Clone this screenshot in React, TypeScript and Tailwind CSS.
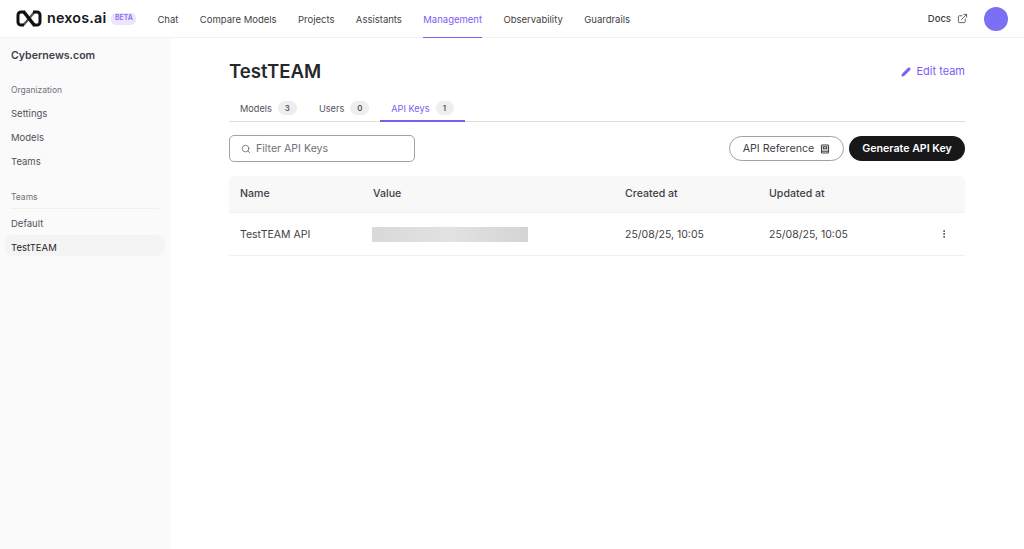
import { EllipsisVertical, ExternalLink, Pencil, Search } from "lucide-react";

const navItems = ["Chat", "Compare Models", "Projects", "Assistants", "Management", "Observability", "Guardrails"];

function Logo() {
  return (
    <svg width="26" height="17" viewBox="0 0 26 17" fill="none" stroke="#111" className="shrink-0">
      <path d="M9 2H5a3 3 0 0 0-3 3v7a3 3 0 0 0 3 3h3" strokeWidth="3" />
      <path d="M17 15h4a3 3 0 0 0 3-3V5a3 3 0 0 0-3-3h-4" strokeWidth="3" />
      <path d="M18.500 2 7.500 15" strokeWidth="2.500" opacity="0.7" />
      <path d="M7.500 1.500 18.500 15.500" strokeWidth="3.500" />
    </svg>
  );
}

function BookIcon() {
  return (
    <svg width="10" height="10" viewBox="0 0 10 10" fill="none" stroke="currentColor" strokeWidth="1.100">
      <rect x="1.500" y="1" width="7" height="8" rx="0.800" />
      <rect x="3.300" y="2.800" width="3.400" height="2" />
      <path d="M1.500 7.200h7" />
    </svg>
  );
}

function SideLink({ label, active }: { label: string; active?: boolean }) {
  return (
    <div className={`mx-[5px] flex h-[21px] items-center rounded-lg px-[6px] pt-[6px] text-[9.500px] ${active ? "bg-[#f4f4f4] text-[#27272a]" : "text-[#52525b]"}`}>
      {label}
    </div>
  );
}

function Tab({ label, count, active }: { label: string; count: number; active?: boolean }) {
  return (
    <div className={`-mb-px flex h-[27px] items-center gap-[6px] border-b-2 px-[11px] text-[9.200px] ${active ? "border-[#7c5cf5] text-[#7c5cf5]" : "border-transparent text-[#52525b]"}`}>
      <span className="pt-[2px]">{label}</span>
      <span className={`flex h-[14px] items-center justify-center rounded-full bg-[#eeeeee] text-[8px] font-medium text-[#3f3f46] ${count === 1 ? "w-[18px]" : "w-[19px]"}`}>{count}</span>
    </div>
  );
}

export default function App() {
  return (
    <div className="flex h-[549px] w-[1024px] flex-col overflow-hidden bg-white font-['Inter',sans-serif] text-[#27272a]">
      <header className="flex h-[38px] shrink-0 items-center border-b border-[#f2f2f2] px-[16px]">
        <Logo />
        <span className="ml-[5px] text-[14.300px] font-semibold leading-none tracking-[0.2px] text-[#18181b]">nexos.ai</span>
        <span className="ml-[5px] flex h-[12px] w-[25px] items-center justify-center rounded-[5px] bg-[#ece6fd] text-[7px] font-semibold text-[#8b6cf6]">BETA</span>
        <nav className="ml-[21px] flex h-full items-center gap-[21.400px]">
          {navItems.map((item) => (
            <div
              key={item}
              className={`-mb-px flex h-full items-center border-b pt-[3px] text-[9.500px] ${item === "Management" ? "border-[#7c5cf5] text-[#7c5cf5]" : "border-transparent text-[#3f3f46]"}`}
            >
              {item}
            </div>
          ))}
        </nav>
        <div className="ml-auto flex items-center gap-[6px] text-[9.500px] font-medium text-[#3f3f46]">
          <span className="pt-[1px]">Docs</span>
          <ExternalLink size={11} strokeWidth={1.75} />
        </div>
        <div className="ml-[16px] h-[24px] w-[24px] rounded-full bg-[#7b6ff5]" />
      </header>

      <div className="flex min-h-0 flex-1">
        <aside className="w-[170px] shrink-0 bg-[#fafafa] pt-[10px]">
          <div className="pl-[11px] text-[10.600px] font-semibold leading-[16px] text-[#3f3f46]">Cybernews.com</div>
          <div className="mb-[5px] mt-[20px] pl-[11px] text-[8.500px] leading-[12px] text-[#71717a]">Organization</div>
          <div className="flex flex-col gap-[3px]">
            <SideLink label="Settings" />
            <SideLink label="Models" />
            <SideLink label="Teams" />
          </div>
          <div className="mx-[11px] mb-[2px] mt-[21px] border-b border-[#efefef] pb-[5px] text-[8.500px] leading-[12px] text-[#71717a]">Teams</div>
          <div className="flex flex-col gap-[3px]">
            <SideLink label="Default" />
            <SideLink label="TestTEAM" active />
          </div>
        </aside>

        <main className="min-w-0 flex-1 px-[59px] pt-[21px]">
          <div className="flex h-[25px] items-center justify-between">
            <h1 className="text-[18.600px] font-semibold text-[#27272a]">TestTEAM</h1>
            <div className="flex items-center gap-[5px] text-[11px] text-[#7c5cf5]">
              <Pencil size={10} strokeWidth={2} fill="currentColor" />
              Edit team
            </div>
          </div>

          <div className="mt-[11px] flex border-b border-[#dfdfdf]">
            <Tab label="Models" count={3} />
            <Tab label="Users" count={0} />
            <Tab label="API Keys" count={1} active />
          </div>

          <div className="mt-[13px] flex items-center">
            <div className="flex h-[27px] w-[186px] items-center gap-[5px] rounded-[5px] border border-[#a1a1aa] pl-[11px] text-[10.600px] text-[#71717a]">
              <Search size={10} strokeWidth={2} />
              Filter API Keys
            </div>
            <button className="ml-auto flex h-[25px] w-[115px] items-center justify-center gap-[6px] rounded-full border border-[#a1a1aa] text-[10.700px] text-[#3f3f46]">
              <span className="pt-[1px]">API Reference</span>
              <BookIcon />
            </button>
            <button className="ml-[5px] flex h-[25px] w-[116px] items-center justify-center rounded-full bg-[#18181b] text-[10.650px] font-semibold text-white">
              Generate API Key
            </button>
          </div>

          <div className="mt-[14px]">
            <div className="flex h-[37px] items-center rounded-t-[5px] border-b border-[#f0f0f0] bg-[#f8f8f8] px-[11px] text-[10.600px] font-medium text-[#3f3f46]">
              <div className="w-[133px]">Name</div>
              <div className="w-[252px]">Value</div>
              <div className="w-[144px]">Created at</div>
              <div>Updated at</div>
            </div>
            <div className="flex h-[43px] items-center border-b border-[#f0f0f0] px-[11px] text-[10.500px] text-[#3f3f46]">
              <div className="w-[133px] pt-[1px]">TestTEAM API</div>
              <div className="w-[252px]">
                <div className="h-[15px] w-[156px] -translate-x-px bg-gradient-to-r from-[#d9d9d9] via-[#e2e2e2] to-[#d4d4d4]" />
              </div>
              <div className="w-[144px] pt-[1px]">25/08/25, 10:05</div>
              <div className="pt-[1px]">25/08/25, 10:05</div>
              <EllipsisVertical size={10} strokeWidth={2.25} className="ml-auto mr-[5px]" />
            </div>
          </div>
        </main>
      </div>
    </div>
  );
}
